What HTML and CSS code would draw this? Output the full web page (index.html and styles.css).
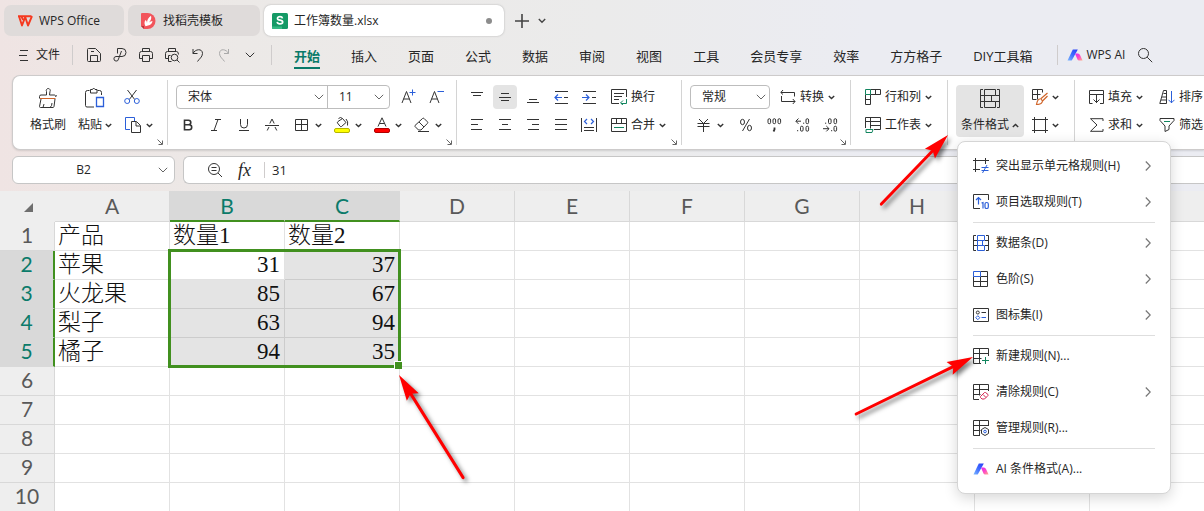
FILE: index.html
```html
<!DOCTYPE html>
<html lang="zh-CN">
<head>
<meta charset="utf-8">
<title>工作簿数量.xlsx - WPS Office</title>
<link rel="stylesheet" href="styles.css">
</head>
<body>
<svg class="defs" aria-hidden="true">
  <defs>
    <symbol id="caret" viewBox="0 0 7 5"><path d="M.8 1 3.500 3.600 6.200 1" stroke-width="1.400"/></symbol>
    <symbol id="down" viewBox="0 0 10 6"><path d="M.8.8 5 5 9.200.8"/></symbol>
    <symbol id="right" viewBox="0 0 6 10"><path d="M.8.5 5.200 5 .8 9.500" stroke-width="1.200"/></symbol>
    <symbol id="launch" viewBox="0 0 6 6"><path d="M.5.5 5 5M5.500 1.500v4h-4"/></symbol>
    <linearGradient id="aiblue" x1="1" y1="0" x2="0" y2="1"><stop offset="0" stop-color="#2a3cf5"/><stop offset=".5" stop-color="#3f6cff"/><stop offset="1" stop-color="#7db8ff"/></linearGradient>
    <linearGradient id="aipink" x1="0" y1="0" x2="1" y2="1"><stop offset="0" stop-color="#d62ef5"/><stop offset=".5" stop-color="#ff45c8"/><stop offset="1" stop-color="#ffb38a"/></linearGradient>
    <symbol id="ai" viewBox="0 0 16 12"><path d="M5.800.5h5L5 11q-.3.500-1 .5H.5z" fill="url(#aiblue)" stroke="none"/><path d="M8 4.500h3q1.300 0 2 1.500l2.600 5.500H12q-1 0-1.500-1L9 7z" fill="url(#aipink)" stroke="none"/></symbol>
  </defs>
</svg>

<header>
  <div class="titlebar">
    <button class="doc"><svg width="16" height="12" viewBox="0 0 16 12"><path d="M1 1.200h13.500M2 1.200 5 10.500 8.200 2 11 10.500 15 1.200M4.500 1.500 6 5" stroke="#f5391f" stroke-width="1.900" stroke-linejoin="round"/></svg>WPS Office</button>
    <button class="doc second"><svg width="16" height="16" viewBox="0 0 16 16"><path d="M1 0h5.500a8 8 0 0 1 0 16H3L0 13V1q0-1 1-1z" fill="#f2545b" stroke="none"/><path d="M0 13h3v3z" fill="#b8343a" stroke="none"/><path d="M4.500 13.200Q2.500 10 4.500 7q1.500 1 1.500 3 0-4.500 4-7.200 1 3.500-2 6.700 1.500-1.500 3.500-1.500-.5 3.800-4.500 4.500z" fill="#fff" stroke="none"/></svg>找稻壳模板</button>
    <button class="doc active"><svg width="16" height="16" viewBox="0 0 16 16"><rect width="16" height="16" rx="1.500" fill="#159a66" stroke="none"/><path d="M0 13.500h10V16H1q-1 0-1-1z" fill="#35b983" stroke="none"/><path d="M10.500 5.400C10.200 4 9.200 3.600 8 3.600c-1.600 0-2.500.7-2.500 1.800 0 2.600 5.200 1 5.200 3.500 0 1.200-1.100 1.900-2.700 1.900S5.400 10 5.200 8.800" stroke="#fff" stroke-width="1.700"/></svg>工作簿数量.xlsx<span class="dot"></span></button>
    <button class="plain" aria-label="新建"><svg width="14" height="14" viewBox="0 0 14 14"><path d="M7 0v14M0 7h14" stroke="#444" stroke-width="1.600"/></svg></button>
    <button class="plain small" aria-label="更多"><svg width="8" height="6" viewBox="0 0 8 6"><path d="M.8 1 4 4.200 7.200 1" stroke="#444" stroke-width="1.400"/></svg></button>
  </div>

  <nav class="menubar">
    <button class="file"><svg width="9" height="12" viewBox="0 0 9 12"><path d="M1 1.500h8M0 6.500h8M1 11.500h8"/></svg>文件</button>
    <span class="bar"></span>
    <div class="quick">
      <button aria-label="保存"><svg width="16" height="16" viewBox="0 0 16 16"><path d="M1.500 2.500q0-1 1-1h7l5 5v7q0 1-1 1h-11q-1 0-1-1zM4.500 14.500v-6h7v6M5 4.500h3"/></svg></button>
      <button aria-label="输出为PDF"><svg width="16" height="16" viewBox="0 0 16 16"><path d="M5.500 6.500v-5h4.500a4 4 0 0 1 0 8H4a2.300 2.300 0 1 0 2.500 2.500l3-8"/></svg></button>
      <button aria-label="打印"><svg width="16" height="16" viewBox="0 0 16 16"><path d="M4.500 4.500v-3h7v3M4.500 11.500h-3v-5q0-2 2-2h9q2 0 2 2v5h-3M4.500 8.500h7v6h-7z"/></svg></button>
      <button aria-label="打印预览"><svg width="16" height="16" viewBox="0 0 16 16"><path d="M4.500 4.500v-3h7v3M4.500 11.500h-3v-5q0-2 2-2h9q2 0 2 3M4.500 14.500v-6h2M4.500 14.500h3M13 13l2.500 2.500"/><circle cx="10.500" cy="10.500" r="3.300"/></svg></button>
      <button aria-label="撤销"><svg width="16" height="16" viewBox="0 0 16 16"><path d="M3 2v4.500h4.500M3 6.500C5 2 12.500 1 12.500 6.500 12.500 10 9 12 7.500 14.500"/></svg></button>
      <button class="dim" aria-label="恢复"><svg width="16" height="16" viewBox="0 0 16 16"><path d="M12.500 2v4.500H8M12.500 6.500C10.500 2 3.500 1 3.500 6.500 3.500 10 7 12 8.500 14.500"/></svg></button>
      <button aria-label="更多"><svg width="10" height="6"><use href="#down"/></svg></button>
    </div>
    <span class="bar after"></span>
    <div class="tabs">
      <a href="#" class="on">开始</a><a href="#">插入</a><a href="#">页面</a><a href="#">公式</a><a href="#">数据</a><a href="#">审阅</a><a href="#">视图</a><a href="#">工具</a><a href="#">会员专享</a><a href="#">效率</a><a href="#">方方格子</a><a href="#">DIY工具箱</a>
    </div>
    <span class="bar"></span>
    <button class="wpsai"><svg width="16" height="12"><use href="#ai"/></svg>WPS AI</button>
    <button aria-label="搜索"><svg width="16" height="16" viewBox="0 0 16 16"><circle cx="6.500" cy="6.500" r="5"/><path d="m10.200 10.200 5 5"/></svg></button>
  </nav>
</header>

<section class="ribbon">
  <div class="group clip">
    <button class="stack"><svg width="20" height="24" viewBox="0 0 20 24"><path d="M8.500 9V5.500a2 2 0 1 1 3.500 0L11.500 9h5q1 0 1 1.500L19 9.500M17 13l-1 7.500q-.3 1-1 1H2.500q-1 0-1-1l1.500-7.500M1.500 12.500v-2Q1.500 9 3 9h5.500M6 18l-1 3.500M14 17q0 3-2 4.500"/><path d="M2 12.500h15.500" stroke="#d0652a"/></svg><span>格式刷</span></button>
    <button class="stack"><svg width="20" height="24" viewBox="0 0 20 24"><path d="M4.500 4.500h-2q-2 0-2 2v13q0 1.500 1.500 1.500h7M12.500 4.500h2q2 0 2 2V9M5.500 3.500h2q1-3 2.500 0h2v3.500H5.500z"/><path d="M11.500 11.500h7v9h-7z" stroke="#2b5fd9" stroke-width="1.300"/></svg><span>粘贴<svg width="7" height="5"><use href="#caret"/></svg></span></button>
    <div class="rows">
      <div class="row"><button class="sq" aria-label="剪切"><svg width="16" height="16" viewBox="0 0 16 16"><path d="M3.500 1 10.700 10.500M12.500 1 5.300 10.500"/><g stroke="#2b5fd9"><circle cx="3.200" cy="12" r="2.500"/><circle cx="12.800" cy="12" r="2.500"/></g></svg></button></div>
      <div class="row"><button class="split" aria-label="复制"><svg width="16" height="16" viewBox="0 0 16 16"><path d="M5 12.500H.5V.5h9V4" stroke="#2b5fd9"/><path d="M6.500 4.500h5l4 4v7h-9zM11 5v4h4"/></svg><svg width="7" height="5"><use href="#caret"/></svg></button></div>
    </div>
    <button class="launcher" aria-label="剪贴板"><svg width="6" height="6"><use href="#launch"/></svg></button>
  </div>

  <div class="group wide-font">
    <div class="rows">
      <div class="row">
        <div class="joined">
          <label class="combo family"><select aria-label="字体"><option>宋体</option></select><svg width="10" height="6"><use href="#down"/></svg></label>
          <label class="combo size"><select aria-label="字号"><option>11</option></select><svg width="10" height="6"><use href="#down"/></svg></label>
        </div>
        <button class="sq" aria-label="增大字号"><svg width="16" height="16" viewBox="0 0 16 16"><path d="m1 14 4.500-11.500L10 14M2.600 10h5.800"/><path d="M11.500.5v6M8.500 3.500h6" stroke="#2b5fd9"/></svg></button>
        <button class="sq" aria-label="减小字号"><svg width="16" height="16" viewBox="0 0 16 16"><path d="m1 14 4.500-11.500L10 14M2.600 10h5.800"/><path d="M8.500 2.500h6.500" stroke="#2b5fd9"/></svg></button>
      </div>
      <div class="row">
        <button class="sq" aria-label="加粗"><svg width="12" height="12" viewBox="0 0 12 12"><path d="M2.500 1.200h4a2.200 2.200 0 0 1 0 4.600h-4zM2.500 5.800h4.700a2.400 2.400 0 0 1 0 5H2.500z" stroke-width="1.600"/></svg></button>
        <button class="sq" aria-label="倾斜"><svg width="12" height="12" viewBox="0 0 12 12"><path d="M5 .5h6M1 11.500h6M8 .5 4 11.500"/></svg></button>
        <button class="sq" aria-label="下划线"><svg width="12" height="12" viewBox="0 0 12 12"><path d="M2.500 0v5.500a3.500 3.500 0 0 0 7 0V0M1 11.500h10"/></svg></button>
        <button class="sq" aria-label="删除线"><svg width="14" height="12" viewBox="0 0 14 12"><path d="M4.800 4.500 7 0l2.200 4.500M0 6.500h14M4 8 2.200 11.500M10 8l1.800 3.500"/></svg></button>
        <button class="split" aria-label="边框"><svg width="16" height="14" viewBox="0 0 16 14"><path d="M1.500 1.500h12v11h-12zM7.500 1.500v11M1.500 6.500h12"/></svg><svg width="7" height="5"><use href="#caret"/></svg></button>
        <button class="split" aria-label="填充颜色"><svg width="16" height="16" viewBox="0 0 16 16"><path d="M4 4.500 8.500 1.500 12 5.500 7.500 9.500q-.8.500-1.500-.3L3.500 6q-.5-1 .5-1.500zM4.500 1.500q2-2 4 0M12 2q2.500 2.500 1.500 6.500"/><rect x=".5" y="11.500" width="15" height="4" rx="1.500" fill="#ff0" stroke="#b5b500"/></svg><svg width="7" height="5"><use href="#caret"/></svg></button>
        <button class="split" aria-label="字体颜色"><svg width="16" height="16" viewBox="0 0 16 16"><path d="M4 9.500 8 .8l4 8.700M5.500 6.500h5"/><rect x=".5" y="11.500" width="15" height="4" rx="1.500" fill="#f00" stroke="#b00000"/></svg><svg width="7" height="5"><use href="#caret"/></svg></button>
        <button class="split" aria-label="清除"><svg width="16" height="16" viewBox="0 0 16 16"><path d="M1 8.500 8.500 1.500q.8-.7 1.600 0l3.300 3.300q.8.800 0 1.600L7 13H4.500L1 9.500q-.5-.5 0-1zM5 5l5 5M4 14.500h11"/></svg><svg width="7" height="5"><use href="#caret"/></svg></button>
      </div>
    </div>
    <button class="launcher" aria-label="字体设置"><svg width="6" height="6"><use href="#launch"/></svg></button>
  </div>

  <div class="group wide-align">
    <div class="rows">
      <div class="row">
        <button class="sq" aria-label="顶端对齐"><svg width="14" height="14" viewBox="0 0 14 14"><path d="M1 2.500h12M3 5.500h8"/></svg></button>
        <button class="sq pressed" aria-label="垂直居中"><svg width="14" height="14" viewBox="0 0 14 14"><path d="M3 3.500h8M1 7.500h12M3 10.500h8"/></svg></button>
        <button class="sq" aria-label="底端对齐"><svg width="14" height="14" viewBox="0 0 14 14"><path d="M3 9.500h8M1 12.500h12"/></svg></button>
        <button class="sq" aria-label="减少缩进"><svg width="14" height="14" viewBox="0 0 14 14"><path d="M1 1.500h13M1 13.500h13M10 7.500h4"/><path d="M4 4.500 1 7.500l3 3M1 7.500h7" stroke="#2b5fd9" stroke-width="1.200"/></svg></button>
        <button class="sq" aria-label="增加缩进"><svg width="14" height="14" viewBox="0 0 14 14"><path d="M1 1.500h13M1 13.500h13M10 7.500h4"/><path d="m4 4.500 3 3-3 3M7 7.500H0" stroke="#2b5fd9" stroke-width="1.200"/></svg></button>
        <button class="text"><svg width="16" height="16" viewBox="0 0 16 16"><path d="M8 14.500H.5V.5h15V8M3 4.500h10M3 7.500h8M3 10.500h5"/><path d="M15.500 10v4.500H10M12 11.500 9.500 14l2.500 2" stroke="#12855f"/></svg>换行</button>
      </div>
      <div class="row">
        <button class="sq" aria-label="左对齐"><svg width="14" height="12" viewBox="0 0 14 12"><path d="M1 .5h12M1 5.500h7M1 10.500h11"/></svg></button>
        <button class="sq" aria-label="水平居中"><svg width="14" height="12" viewBox="0 0 14 12"><path d="M1 .5h12M4 5.500h6M1 10.500h12"/></svg></button>
        <button class="sq" aria-label="右对齐"><svg width="14" height="12" viewBox="0 0 14 12"><path d="M1 .5h12M6 5.500h7M2 10.500h11"/></svg></button>
        <button class="sq" aria-label="两端对齐"><svg width="14" height="12" viewBox="0 0 14 12"><path d="M1 .5h12M1 5.500h12M1 10.500h12"/></svg></button>
        <button class="sq" aria-label="分散对齐"><svg width="16" height="14" viewBox="0 0 16 14"><path d="M.5 0v14M15.500 0v14M3 9.500h10M3 12.500h10"/><path d="M6 1 3.500 3.500 6 6M10 1l2.500 2.500L10 6" stroke="#2b5fd9" stroke-width="1.200"/></svg></button>
        <button class="text"><svg width="16" height="14" viewBox="0 0 16 14"><path d="M.5.5h15v13H.5zM.5 5.500h15M5.500.5v5M10.500.5v5"/><path d="M3 9.500h10" stroke="#12855f"/></svg>合并<svg width="7" height="5"><use href="#caret"/></svg></button>
      </div>
    </div>
    <button class="launcher" aria-label="对齐设置"><svg width="6" height="6"><use href="#launch"/></svg></button>
  </div>

  <div class="group wide-number">
    <div class="rows">
      <div class="row">
        <label class="combo format"><select aria-label="数字格式"><option>常规</option></select><svg width="10" height="6"><use href="#down"/></svg></label>
        <button class="text"><svg width="16" height="16" viewBox="0 0 16 16"><path d="M3 1 .8 3.500 3 5.500M1 3.500h13.500v4M1.500 7v5.500H15M12.800 10l2.200 2.500-2.200 2.500"/></svg>转换<svg width="7" height="5"><use href="#caret"/></svg></button>
      </div>
      <div class="row">
        <button class="split currency" aria-label="货币"><svg width="16" height="14" viewBox="0 0 16 14"><path d="m3 1 4.500 4.500L12 1M1.500 5.500h12M1.500 8.500h12M7.500 5.500V14"/></svg><svg width="7" height="5"><use href="#caret"/></svg></button>
        <button class="sq" aria-label="百分比"><svg width="14" height="14" viewBox="0 0 14 14"><ellipse cx="3.500" cy="4" rx="2" ry="2.700"/><ellipse cx="10.500" cy="10" rx="2" ry="2.700"/><path d="m10.500 1-7 12"/></svg></button>
        <button class="sq" aria-label="千位分隔"><svg width="15" height="14" viewBox="0 0 15 14"><rect x="1" y=".7" width="2.600" height="5" rx="1.300"/><rect x="6" y=".7" width="2.600" height="5" rx="1.300"/><rect x="11" y=".7" width="2.600" height="5" rx="1.300"/><path d="M7.500 9.500v2l-1 2" stroke-width="1.800"/></svg></button>
        <button class="sq" aria-label="增加小数位"><svg width="15" height="14" viewBox="0 0 15 14"><path d="M3.500.5.8 3.200l2.700 2.700M1 3.200h5M8 5.200h1.200M2 12.700h1.200"/><rect x="11" y=".7" width="2.600" height="5" rx="1.300"/><rect x="5.500" y="8.200" width="2.600" height="5" rx="1.300"/><rect x="11" y="8.200" width="2.600" height="5" rx="1.300"/></svg></button>
        <button class="sq" aria-label="减少小数位"><svg width="15" height="14" viewBox="0 0 15 14"><path d="M3.300 8 6 10.700l-2.700 2.700M6 10.700H0M8 12.700h1.200M2 5.200h1.200"/><rect x="11" y=".7" width="2.600" height="5" rx="1.300"/><rect x="5.500" y=".7" width="2.600" height="5" rx="1.300"/><rect x="11" y="8.200" width="2.600" height="5" rx="1.300"/></svg></button>
      </div>
    </div>
    <button class="launcher" aria-label="数字设置"><svg width="6" height="6"><use href="#launch"/></svg></button>
  </div>

  <div class="group wide-cells">
    <div class="rows">
      <div class="row"><button class="text"><svg width="16" height="16" viewBox="0 0 16 16"><path d="M5.500.5h10v5h-10M10.500.5v5M.5 5.500v10h5v-10M.5 10.500h5"/><path d="M.5.5h5v5h-5z" stroke="#12855f"/></svg>行和列<svg width="7" height="5"><use href="#caret"/></svg></button></div>
      <div class="row"><button class="text"><svg width="16" height="16" viewBox="0 0 16 16"><path d="M.5 11V.5h15v12H9M5.500.5v11M.5 4.500h15M5.500 8.500h10"/><path d="M1 12.500h7l-1 3H1z" stroke="#12855f"/></svg>工作表<svg width="7" height="5"><use href="#caret"/></svg></button></div>
    </div>
  </div>

  <div class="group wide-style">
    <div class="anchor">
      <button class="stack pressed"><svg width="20" height="20" viewBox="0 0 20 20"><path d="M3 .5H.5v18H3M17 .5h2.500v18H17M.5 6.500h4M.5 12.500h4M15.500 6.500h4M15.500 12.500h4M4.500.5h11v6h-11zM4.500 6.500h7v6h-7zM4.500 12.500h11v6h-11z"/></svg><span>条件格式<svg class="up" width="7" height="5"><use href="#caret"/></svg></span></button>
      <div class="menu" role="menu">
        <button role="menuitem"><svg width="16" height="16" viewBox="0 0 16 16"><path d="M2.500 0v14M12.500 0v6M0 2.500h16M0 11.500h7"/><path d="M8.500 9.500h7M8.500 12.500h7M14 7l-4.500 8" stroke="#2b5fd9"/></svg>突出显示单元格规则(H)<svg class="more" width="6" height="10"><use href="#right"/></svg></button>
        <button role="menuitem"><svg width="16" height="16" viewBox="0 0 16 16"><path d="M7 14.500H.5V.5h15V6"/><path d="M5.500 10.500v-7M3 6l2.500-2.500L8 6M8.500 9l1.500-.5v6" stroke="#2b5fd9" stroke-width="1.200"/><rect x="12" y="8.500" width="3.300" height="6" rx="1.600" stroke="#2b5fd9" stroke-width="1.200"/></svg>项目选取规则(T)<svg class="more" width="6" height="10"><use href="#right"/></svg></button>
        <hr>
        <button role="menuitem"><svg width="16" height="16" viewBox="0 0 16 16"><path d="M3 .5H.5v15H3M13 .5h2.500v15H13M.5 5.500h4M.5 10.500h4M12 5.500h3.500M12 10.500h3.500"/><path d="M4.500.5h7v5h-7zM4.500 5.500h5v5h-5zM4.500 10.500h7v5h-7z" stroke="#2b5fd9"/></svg>数据条(D)<svg class="more" width="6" height="10"><use href="#right"/></svg></button>
        <button role="menuitem"><svg width="16" height="16" viewBox="0 0 16 16"><path d="M.5 5.500v10h14V.5h-7M.5 10.500h14M8 5.500h6.500M7.500 5.500v10"/><path d="M.5.5h7v5h-7z" stroke="#2b5fd9"/></svg>色阶(S)<svg class="more" width="6" height="10"><use href="#right"/></svg></button>
        <button role="menuitem"><svg width="16" height="16" viewBox="0 0 16 16"><path d="M.5 1.500h15v13H.5zM8.500 5.500H13"/><circle cx="4.800" cy="5.500" r="1.500"/><path d="m4.800 8.700 2 2-2 2-2-2zM8.500 10.500H13" stroke="#2b5fd9"/></svg>图标集(I)<svg class="more" width="6" height="10"><use href="#right"/></svg></button>
        <hr>
        <button role="menuitem"><svg width="16" height="16" viewBox="0 0 16 16"><path d="M8 15.500H.5V.5h15V8M.5 5.500h15M.5 10.500h8M6.500.5v15"/><path d="M12.500 9v7M9 12.500h7" stroke="#12855f"/></svg>新建规则(N)...</button>
        <button role="menuitem"><svg width="16" height="16" viewBox="0 0 16 16"><path d="M6 15.500H.5V.5h15V7M.5 5.500h15M.5 10.500h7M6.500.5v11"/><path d="m7.500 12.500 4-4q.5-.5 1 0l2.500 2q.5.5 0 1l-3.500 3.500H9l-1.500-1.500q-.5-.5 0-1zM10 10.500l3 3" stroke="#d42a55"/></svg>清除规则(C)<svg class="more" width="6" height="10"><use href="#right"/></svg></button>
        <button role="menuitem"><svg width="16" height="16" viewBox="0 0 16 16"><path d="M7 15.500H.5V.5h15V6M.5 5.500h15M.5 10.500h7M6.500.5v15M12 7.500l3.500 2v4l-3.500 2-3.500-2v-4z"/><circle cx="12" cy="11.500" r="1.300" stroke="#2b5fd9"/></svg>管理规则(R)...</button>
        <hr>
        <button role="menuitem"><svg width="16" height="12"><use href="#ai"/></svg>AI 条件格式(A)...</button>
      </div>
    </div>
    <div class="rows">
      <div class="row"><button class="split tight" aria-label="表格样式"><svg width="16" height="16" viewBox="0 0 16 16"><path d="M4.500 10.500h-4V.5h10v3M.5 5.500h8M5.500.5v10"/><path d="M15.500 4 8.500 10M15.500 7 10.500 12M8 10q-2.500 0-3.500 5.500 5.500 0 6-3.500L8.500 9.500" stroke="#d0652a" stroke-width="1.200"/></svg><svg width="7" height="5"><use href="#caret"/></svg></button></div>
      <div class="row"><button class="split tight" aria-label="单元格样式"><svg width="16" height="16" viewBox="0 0 16 16"><path d="M2.500 0v16M13.500 0v16M0 2.500h16M0 13.500h16"/></svg><svg width="7" height="5"><use href="#caret"/></svg></button></div>
    </div>
  </div>

  <div class="group last">
    <div class="rows">
      <div class="row"><button class="text fixed"><svg width="15" height="15" viewBox="0 0 15 15"><path d="M.5 4.500v-4h14v4H.500v9h3M11 13.500h3.500v-9M7.500 5v8M4.500 9.500l3 3 3-3"/></svg>填充<svg width="7" height="5"><use href="#caret"/></svg></button>
      <button class="text"><svg width="16" height="16" viewBox="0 0 16 16"><path d="M.8 14.500 4.500 1.500h3v13zM3 8h4.500M2 11h5.500M4.500 4.500h3"/><path d="M12.500 2v12M9.500 10.800l3 3 3-3" stroke="#2b5fd9"/></svg>排序<svg width="7" height="5"><use href="#caret"/></svg></button></div>
      <div class="row"><button class="text fixed"><svg width="15" height="14" viewBox="0 0 15 14"><path d="M14 3V.7H1.500L8 7 1.500 13.300H14V11"/></svg>求和<svg width="7" height="5"><use href="#caret"/></svg></button>
      <button class="text"><svg width="16" height="14" viewBox="0 0 16 14"><path d="M1 .5h14v2L10 8v3.500l-4 2V8L1 2.500z"/><path d="M5 3.500h6" stroke="#12855f"/></svg>筛选<svg width="7" height="5"><use href="#caret"/></svg></button></div>
    </div>
  </div>
</section>

<section class="formula">
  <label class="name"><input type="text" value="B2" aria-label="名称框"><svg width="10" height="6"><use href="#down"/></svg></label>
  <div class="entry">
    <button aria-label="缩小"><svg width="16" height="16" viewBox="0 0 16 16"><circle cx="7" cy="7" r="5.500"/><path d="m11 11 4 4M4.500 5.500h5M4.500 8.500h5"/></svg></button>
    <button class="fx" aria-label="插入函数">fx</button>
    <span class="bar"></span>
    <input type="text" value="31" aria-label="编辑栏">
  </div>
</section>

<main class="sheet">
  <table>
    <colgroup><col class="head"><col><col><col><col><col><col><col><col><col><col></colgroup>
    <thead><tr><th class="corner"><svg width="9" height="9" viewBox="0 0 9 9"><path d="M9 0v9H0z" fill="#6e6e6e" stroke="none"/></svg></th><th>A</th><th class="sel">B</th><th class="sel">C</th><th>D</th><th>E</th><th>F</th><th>G</th><th>H</th><th aria-label="I"></th><th aria-label="J"></th></tr></thead>
    <tbody>
      <tr><th>1</th><td>产品</td><td>数量1</td><td>数量2</td><td></td><td></td><td></td><td></td><td></td><td></td><td></td></tr>
      <tr><th class="sel">2</th><td>苹果</td><td class="num first">31<span class="selection"></span></td><td class="num in">37</td><td></td><td></td><td></td><td></td><td></td><td></td><td></td></tr>
      <tr><th class="sel">3</th><td>火龙果</td><td class="num in">85</td><td class="num in">67</td><td></td><td></td><td></td><td></td><td></td><td></td><td></td></tr>
      <tr><th class="sel">4</th><td>梨子</td><td class="num in">63</td><td class="num in">94</td><td></td><td></td><td></td><td></td><td></td><td></td><td></td></tr>
      <tr><th class="sel">5</th><td>橘子</td><td class="num in">94</td><td class="num in">35</td><td></td><td></td><td></td><td></td><td></td><td></td><td></td></tr>
      <tr><th>6</th><td></td><td></td><td></td><td></td><td></td><td></td><td></td><td></td><td></td><td></td></tr>
      <tr><th>7</th><td></td><td></td><td></td><td></td><td></td><td></td><td></td><td></td><td></td><td></td></tr>
      <tr><th>8</th><td></td><td></td><td></td><td></td><td></td><td></td><td></td><td></td><td></td><td></td></tr>
      <tr><th>9</th><td></td><td></td><td></td><td></td><td></td><td></td><td></td><td></td><td></td><td></td></tr>
      <tr><th>10</th><td></td><td></td><td></td><td></td><td></td><td></td><td></td><td></td><td></td><td></td></tr>
    </tbody>
  </table>
</main>

<svg class="arrows" width="1204" height="511" viewBox="0 0 1204 511" aria-hidden="true">
  <g transform="translate(948 135) rotate(-46)"><path d="M-96 0h74"/><polygon points="0,0 -26,-7 -22,0 -26,7"/></g>
  <g transform="translate(973 357) rotate(-26)"><path d="M-130 0h108"/><polygon points="0,0 -26,-7 -22,0 -26,7"/></g>
  <g transform="translate(399 375) rotate(-122)"><path d="M-121 0h99"/><polygon points="0,0 -26,-7 -22,0 -26,7"/></g>
</svg>
</body>
</html>
```
FILE: styles.css
```css
* { box-sizing: border-box; }

html, body { height: 100%; }

body {
  margin: 0;
  display: flex;
  flex-direction: column;
  overflow: hidden;
  color: #262626;
  font: 12px/16px "Open Sans", "Noto Sans CJK SC", sans-serif;
  background: linear-gradient(90deg, #efe4e3, #ece9e7 20%, #ebebeb 50%, #ebecf2 72%);
}

button, input, select { font: inherit; color: inherit; margin: 0; padding: 0; border: 0; background: none; }
button { display: flex; align-items: center; flex: none; white-space: nowrap; }
svg { fill: none; stroke: #333; flex: none; display: block; }
.defs { position: absolute; width: 0; height: 0; }
.bar { width: 1px; height: 20px; background: #cfcccc; flex: none; }

/* Document tabs */
.titlebar { display: flex; align-items: center; gap: 4px; padding: 5px 4px 0; }
.doc { width: 120px; height: 31px; padding: 0 13px; gap: 6px; border-radius: 7px; background: #dfdbda; }
.doc.second { width: 132px; }
.doc.active { width: 240px; padding: 0 12px 0 8px; background: #fff; box-shadow: 0 0 2px #aaa; }
.dot { width: 6px; height: 6px; border-radius: 3px; background: #8c8c8c; margin-left: auto; }
.plain { padding-left: 7px; }
.small { padding-left: 5px; }

/* Menu bar */
.menubar { display: flex; align-items: center; height: 38px; padding-left: 19px; }
.menubar > .bar { margin: 0 9px; }
.file { gap: 8px; margin-right: 3px; }
.quick { display: flex; gap: 2px; }
.quick button { width: 24px; height: 24px; justify-content: center; }
.quick .dim svg { stroke: #aaa; }
.tabs { display: flex; gap: 31px; margin: 0 15px 0 13px; font-size: 13px; }
.tabs a { color: inherit; text-decoration: none; white-space: nowrap; line-height: 20px; padding: 4px 0 1px; border-bottom: 2px solid transparent; }
.tabs .on { color: #087a69; font-weight: 700; border-color: #087a69; }
.wpsai { gap: 4px; margin-right: 12px; }

/* Ribbon */
.ribbon { display: flex; flex: none; margin: 1px 0 0 12px; height: 75px; padding: 4px 0; border: 1px solid #cdcbcb; border-right: 0; border-radius: 8px 0 0 8px; background: #fff; box-shadow: 0 1px 2px rgba(0,0,0,.12); }
.group { display: flex; flex: none; position: relative; gap: 4px; padding: 5px 8px 0; border-right: 1px solid #d4d4d4; }
.clip { width: 155px; padding-left: 13px; }
.wide-font { width: 289px; }
.wide-align { width: 225px; }
.wide-number { width: 169px; }
.wide-cells { width: 97px; }
.wide-style { width: 127px; }
.last { border: 0; }
.rows { display: flex; flex-direction: column; gap: 4px; }
.row { display: flex; gap: 4px; height: 24px; }
.sq { width: 24px; height: 24px; justify-content: center; border-radius: 4px; }
.split { width: 36px; height: 24px; padding-left: 6px; gap: 5px; }
.split.tight { padding-left: 4px; gap: 4px; }
.currency { width: 40px; }
.text { height: 24px; padding-left: 6px; gap: 4px; }
.fixed { width: 66px; }
.pressed { background: #e4e4e4; border-radius: 4px; }
.stack { height: 52px; flex-direction: column; justify-content: space-between; padding: 1px 5px 4px; border-radius: 4px; }
.stack span { display: flex; align-items: center; gap: 3px; }
.clip .stack { padding: 1px 4px 4px; }
.clip .split { padding-left: 5px; }
.anchor .stack { width: 68px; padding-top: 4px; }
.up { transform: scaleY(-1); }
.launcher { position: absolute; right: 4px; bottom: 0; }
.launcher svg { stroke: #666; }

.joined { display: flex; border: 1px solid #bdbdbd; border-radius: 4px; margin-right: 3px; }
.combo { position: relative; display: flex; }
.combo select { appearance: none; width: 100%; padding-left: 11px; cursor: default; outline: 0; }
.combo svg { position: absolute; right: 3px; top: 8px; pointer-events: none; stroke: #666; }
.family { width: 151px; border-right: 1px solid #bdbdbd; }
.size { width: 61px; }
.size svg { right: 5px; }
.format { width: 80px; border: 1px solid #bdbdbd; border-radius: 4px; }

/* Drop-down menu */
.anchor { position: relative; }
.menu { position: absolute; z-index: 2; left: 1px; top: 56px; width: 214px; padding: 6px 15px 6px; border: 1px solid #d5d5d5; border-radius: 8px; background: #fff; box-shadow: 0 4px 14px rgba(0,0,0,.16); }
.menu button { width: 100%; height: 36px; gap: 7px; }
.menu .more { margin: 0 4px 0 auto; stroke: #777; }
.menu hr { margin: 2px 0; border: 0; height: 1px; background: #dedede; }

/* Formula bar */
.formula { display: flex; flex: none; gap: 8px; padding: 6px 0 7px 12px; }
.name, .entry { display: flex; align-items: center; height: 28px; background: #fff; border: 1px solid #c6c6c6; border-radius: 6px; }
.name { width: 163px; padding-right: 6px; }
.name svg { stroke: #666; }
.name input { flex: 1; min-width: 0; padding-right: 4px; text-align: center; }
.entry { flex: 1; padding-left: 23px; border-right: 0; border-radius: 6px 0 0 6px; }
.entry .bar { height: 16px; }
.entry input { flex: 1; padding-left: 7px; font-size: 13px; }
.fx { margin: 0 13px 0 15px; font: italic 18px/20px "Liberation Serif", serif; }

/* Grid */
.sheet { flex: 1; min-height: 0; overflow: hidden; background: #fff; }
table { table-layout: fixed; width: 1205px; border-spacing: 0; border-collapse: separate; }
col { width: 115px; }
.head { width: 55px; }
th, td { height: 29px; padding: 0; border: 0 solid #e2e2e2; border-width: 0 1px 1px 0; }
th { background: #eee; color: #595959; font: 21px/26px Lato, sans-serif; border-color: #d8d8d8; vertical-align: top; }
thead th { height: 31px; padding-top: 2px; }
th.sel { background: #d9d9d9; color: #0b7b6a; border-color: #d9d9d9; }
thead th.sel { border-bottom: 2px solid #41901f; }
tbody th.sel { border-right: 2px solid #41901f; }
.corner svg { margin: 10px 0 0 24px; }
thead .corner { border-color: #eee; }
td { padding: 0 4px 0 3px; font: 23px/28px "Liberation Serif", "Noto Sans CJK SC", serif; font-weight: 300; color: #111; white-space: nowrap; }
.num { text-align: right; }
.in { background: #e4e4e4; border-color: #ccc; }
.first { position: relative; }
.selection { position: absolute; left: -2px; top: -2px; width: 233px; height: 119px; border: 3px solid #41901f; }
.selection::after { content: ""; position: absolute; right: -4px; bottom: -4px; width: 7px; height: 7px; background: #41901f; border: 1px solid #fff; border-width: 1px 0 0 1px; }

/* Annotation arrows */
.arrows { position: absolute; left: 0; top: 0; z-index: 3; pointer-events: none; filter: drop-shadow(3px 3px 2px rgba(0,0,0,.5)); }
.arrows path { stroke: #f00; stroke-width: 3; stroke-linecap: round; }
.arrows polygon { fill: #f00; stroke: none; }
```
